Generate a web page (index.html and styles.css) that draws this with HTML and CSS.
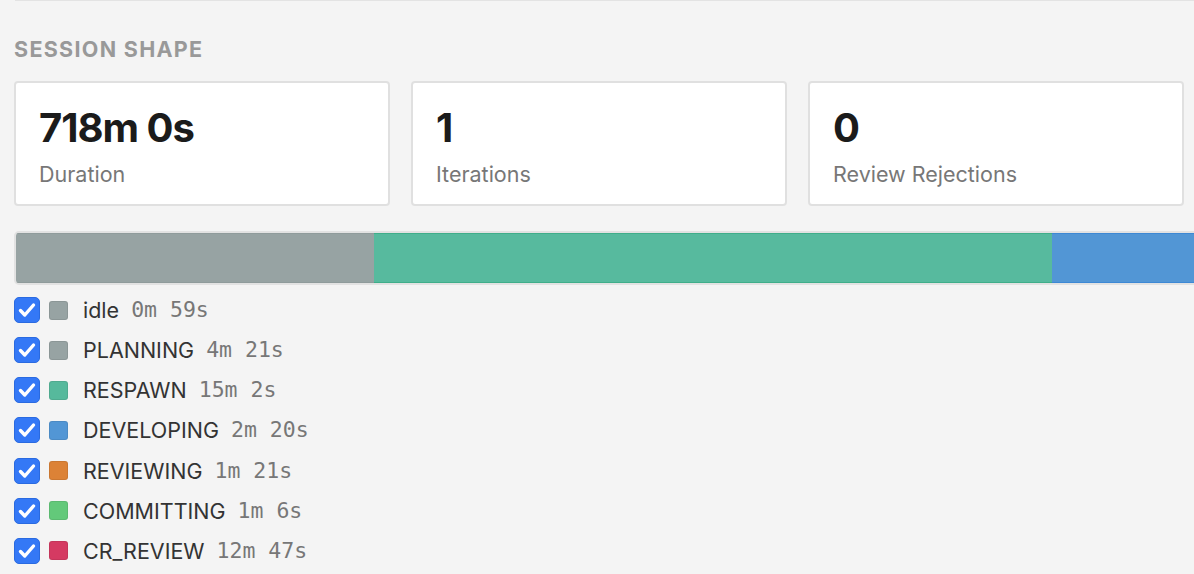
FILE: index.html
```html
<!DOCTYPE html>
<html>
<head>
<meta charset="utf-8">
<link rel="stylesheet" href="styles.css">
</head>
<body>
<div class="page">
  <div class="topline"></div>
  <h2 class="section-title">SESSION SHAPE</h2>
  <div class="cards">
    <div class="card"><div class="card-value">718m 0s</div><div class="card-label">Duration</div></div>
    <div class="card"><div class="card-value">1</div><div class="card-label">Iterations</div></div>
    <div class="card"><div class="card-value">0</div><div class="card-label">Review Rejections</div></div>
  </div>
  <div class="bar">
    <div class="seg seg-gray" style="width:358px"></div>
    <div class="seg seg-green" style="width:678px"></div>
    <div class="seg seg-blue" style="width:300px"></div>
  </div>
  <ul class="legend">
    <li class="row"><span class="check"><svg viewBox="0 0 26 26" width="26" height="26"><path d="M6.5 13.5 L10.8 18 L19.5 8" fill="none" stroke="#fff" stroke-width="3.4" stroke-linecap="round" stroke-linejoin="round"/></svg></span><span class="swatch sw-gray"></span><span class="name">idle</span><span class="time">0m 59s</span></li>
    <li class="row"><span class="check"><svg viewBox="0 0 26 26" width="26" height="26"><path d="M6.5 13.5 L10.8 18 L19.5 8" fill="none" stroke="#fff" stroke-width="3.4" stroke-linecap="round" stroke-linejoin="round"/></svg></span><span class="swatch sw-gray"></span><span class="name">PLANNING</span><span class="time">4m 21s</span></li>
    <li class="row"><span class="check"><svg viewBox="0 0 26 26" width="26" height="26"><path d="M6.5 13.5 L10.8 18 L19.5 8" fill="none" stroke="#fff" stroke-width="3.4" stroke-linecap="round" stroke-linejoin="round"/></svg></span><span class="swatch sw-green"></span><span class="name">RESPAWN</span><span class="time">15m 2s</span></li>
    <li class="row"><span class="check"><svg viewBox="0 0 26 26" width="26" height="26"><path d="M6.5 13.5 L10.8 18 L19.5 8" fill="none" stroke="#fff" stroke-width="3.4" stroke-linecap="round" stroke-linejoin="round"/></svg></span><span class="swatch sw-blue"></span><span class="name">DEVELOPING</span><span class="time">2m 20s</span></li>
    <li class="row"><span class="check"><svg viewBox="0 0 26 26" width="26" height="26"><path d="M6.5 13.5 L10.8 18 L19.5 8" fill="none" stroke="#fff" stroke-width="3.4" stroke-linecap="round" stroke-linejoin="round"/></svg></span><span class="swatch sw-orange"></span><span class="name">REVIEWING</span><span class="time">1m 21s</span></li>
    <li class="row"><span class="check"><svg viewBox="0 0 26 26" width="26" height="26"><path d="M6.5 13.5 L10.8 18 L19.5 8" fill="none" stroke="#fff" stroke-width="3.4" stroke-linecap="round" stroke-linejoin="round"/></svg></span><span class="swatch sw-lime"></span><span class="name">COMMITTING</span><span class="time">1m 6s</span></li>
    <li class="row"><span class="check"><svg viewBox="0 0 26 26" width="26" height="26"><path d="M6.5 13.5 L10.8 18 L19.5 8" fill="none" stroke="#fff" stroke-width="3.4" stroke-linecap="round" stroke-linejoin="round"/></svg></span><span class="swatch sw-red"></span><span class="name">CR_REVIEW</span><span class="time">12m 47s</span></li>
  </ul>
</div>
</body>
</html>
```

FILE: styles.css
```css
html, body {
  margin: 0;
  padding: 0;
  background: #f4f4f4;
  overflow: hidden;
}
body {
  font-family: Inter, "Liberation Sans", sans-serif;
  width: 1194px;
  height: 574px;
}
.page {
  padding: 0 10px 0 14px;
}
.topline {
  height: 0;
  border-top: 1px solid #e3e3e3;
  margin-left: 1px;
  margin-right: -10px;
}
.section-title {
  margin: 35px 0 0 0;
  font-size: 21.5px;
  line-height: 26px;
  font-weight: 700;
  letter-spacing: 1.3px;
  color: #999;
}
.cards {
  display: grid;
  grid-template-columns: repeat(3, 1fr);
  gap: 21px;
  margin-top: 19px;
}
.card {
  background: #fff;
  border: 2px solid #e0e0e0;
  border-radius: 4px;
  padding: 20.5px 24px 17px 23px;
}
.card-value {
  font-size: 40px;
  line-height: 48px;
  font-weight: 700;
  color: #1b1b1b;
  letter-spacing: -1px;
}
.card-label {
  margin-top: 9.5px;
  font-size: 21.5px;
  line-height: 26px;
  color: #777;
}
.bar {
  margin-top: 25px;
  margin-right: -200px;
  height: 50px;
  border: 2px solid #e2e2e2;
  border-radius: 5px;
  display: flex;
  overflow: hidden;
}
.seg {
  height: 100%;
  box-sizing: border-box;
}
.seg-gray { background: #97a3a3; box-shadow: inset 0 1px 0 #8f9b9b, inset 0 -1px 0 #8f9b9b; }
.seg-green { background: #57ba9e; box-shadow: inset 0 1px 0 #3fae8a, inset 0 -1px 0 #3fae8a; }
.seg-blue { background: #5296d5; box-shadow: inset 0 1px 0 #3d88d4, inset 0 -1px 0 #3d88d4; }
.legend {
  list-style: none;
  margin: 12px 0 0 0;
  padding: 0;
  display: flex;
  flex-direction: column;
  gap: 14.17px;
}
.row {
  display: flex;
  align-items: center;
  height: 26px;
}
.check {
  width: 26px;
  height: 26px;
  box-sizing: border-box;
  background: #3478f6;
  border: 1px solid #2a6ae0;
  border-radius: 5px;
  display: flex;
  align-items: center;
  justify-content: center;
}
.check svg {
  display: block;
  margin: -1px;
}
.swatch {
  width: 19px;
  height: 19px;
  box-sizing: border-box;
  border-radius: 3px;
  margin-left: 9px;
  border: 1px solid rgba(0,0,0,0.08);
}
.sw-gray { background: #97a3a3; }
.sw-green { background: #56b99c; }
.sw-blue { background: #5296d5; }
.sw-orange { background: #dc8236; }
.sw-lime { background: #63c97a; }
.sw-red { background: #d53a62; }
.name {
  margin-left: 15px;
  font-size: 21.5px;
  line-height: 26px;
  color: #333;
}
.time {
  margin-left: 12px;
  font-family: "DejaVu Sans Mono", "Liberation Mono", monospace;
  font-size: 21.5px;
  line-height: 26px;
  color: #777;
}
```
